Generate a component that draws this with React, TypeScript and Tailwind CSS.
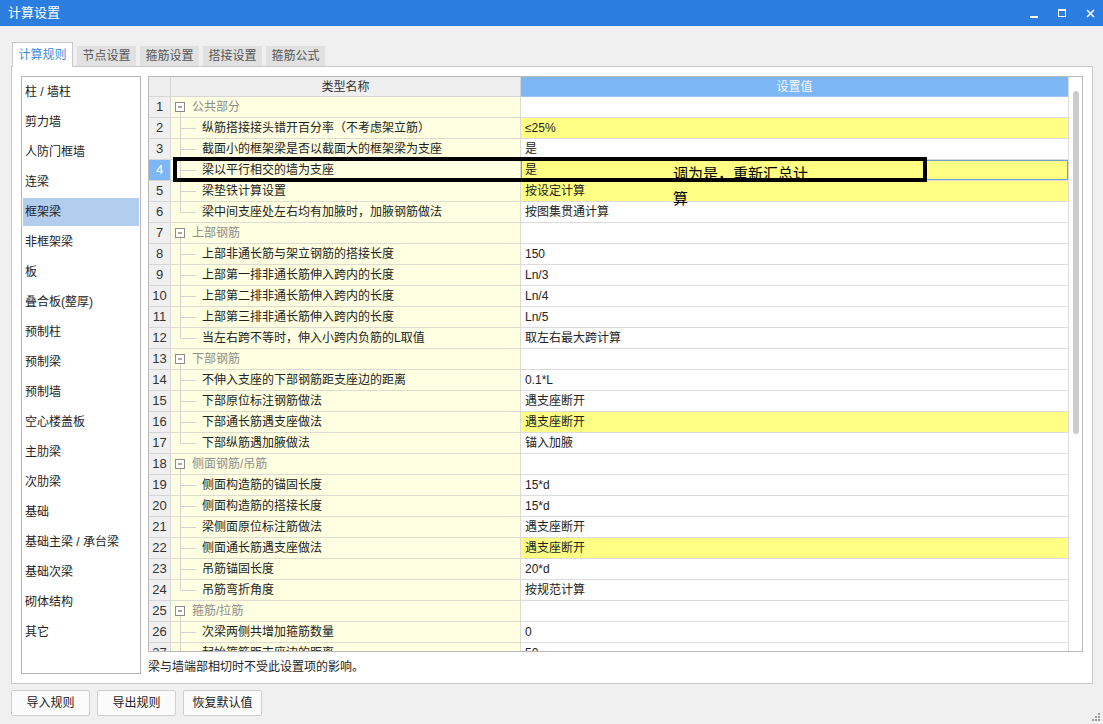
import React from 'react'

type Row = { n: number; name: string; value?: string; group?: boolean; hl?: boolean; last?: boolean }

const rows: Row[] = [
  { n: 1, name: '公共部分', group: true },
  { n: 2, name: '纵筋搭接接头错开百分率（不考虑架立筋）', value: '≤25%', hl: true },
  { n: 3, name: '截面小的框架梁是否以截面大的框架梁为支座', value: '是' },
  { n: 4, name: '梁以平行相交的墙为支座', value: '是', hl: true },
  { n: 5, name: '梁垫铁计算设置', value: '按设定计算', hl: true },
  { n: 6, name: '梁中间支座处左右均有加腋时，加腋钢筋做法', value: '按图集贯通计算', last: true },
  { n: 7, name: '上部钢筋', group: true },
  { n: 8, name: '上部非通长筋与架立钢筋的搭接长度', value: '150' },
  { n: 9, name: '上部第一排非通长筋伸入跨内的长度', value: 'Ln/3' },
  { n: 10, name: '上部第二排非通长筋伸入跨内的长度', value: 'Ln/4' },
  { n: 11, name: '上部第三排非通长筋伸入跨内的长度', value: 'Ln/5' },
  { n: 12, name: '当左右跨不等时，伸入小跨内负筋的L取值', value: '取左右最大跨计算', last: true },
  { n: 13, name: '下部钢筋', group: true },
  { n: 14, name: '不伸入支座的下部钢筋距支座边的距离', value: '0.1*L' },
  { n: 15, name: '下部原位标注钢筋做法', value: '遇支座断开' },
  { n: 16, name: '下部通长筋遇支座做法', value: '遇支座断开', hl: true },
  { n: 17, name: '下部纵筋遇加腋做法', value: '锚入加腋', last: true },
  { n: 18, name: '侧面钢筋/吊筋', group: true },
  { n: 19, name: '侧面构造筋的锚固长度', value: '15*d' },
  { n: 20, name: '侧面构造筋的搭接长度', value: '15*d' },
  { n: 21, name: '梁侧面原位标注筋做法', value: '遇支座断开' },
  { n: 22, name: '侧面通长筋遇支座做法', value: '遇支座断开', hl: true },
  { n: 23, name: '吊筋锚固长度', value: '20*d' },
  { n: 24, name: '吊筋弯折角度', value: '按规范计算', last: true },
  { n: 25, name: '箍筋/拉筋', group: true },
  { n: 26, name: '次梁两侧共增加箍筋数量', value: '0' },
  { n: 27, name: '起始箍筋距支座边的距离', value: '50' },
]

const sideItems = [
  '柱 / 墙柱', '剪力墙', '人防门框墙', '连梁', '框架梁', '非框架梁', '板', '叠合板(整厚)',
  '预制柱', '预制梁', '预制墙', '空心楼盖板', '主肋梁', '次肋梁', '基础', '基础主梁 / 承台梁',
  '基础次梁', '砌体结构', '其它',
]

const tabs = ['计算规则', '节点设置', '箍筋设置', '搭接设置', '箍筋公式']

function Tree({ group, last }: { group?: boolean; last?: boolean }) {
  return (
    <svg width="31" height="20" className="shrink-0">
      {group ? (
        <>
          <rect x="4.5" y="5.5" width="9" height="9" fill="#fff" stroke="#8c8c8c" />
          <line x1="7" y1="10" x2="11" y2="10" stroke="#555" />
          <line x1="9.5" y1="15" x2="9.5" y2="20" stroke="#d2d2d2" />
        </>
      ) : (
        <>
          <line x1="9.5" y1="0" x2="9.5" y2={last ? 10.5 : 20} stroke="#d2d2d2" />
          <line x1="10" y1="10.5" x2="25" y2="10.5" stroke="#d2d2d2" />
        </>
      )}
    </svg>
  )
}

export default function App() {
  return (
    <div className="relative w-[1103px] h-[724px] bg-[#f0f0f0] flex flex-col overflow-hidden text-[12px] text-[#222] font-['Liberation_Sans','Noto_Sans_CJK_SC',sans-serif]">
      {/* title bar */}
      <div className="h-[26px] shrink-0 bg-[#2b7de0] flex items-center justify-between pl-[8px] pr-[8px] text-white">
        <span className="text-[13px]">计算设置</span>
        <div className="flex items-center gap-[20px]">
          <svg width="8" height="10"><line x1="0" y1="9" x2="8" y2="9" stroke="#fff" strokeWidth="2" /></svg>
          <svg width="8" height="8"><rect x="0.5" y="0.5" width="7" height="7" fill="none" stroke="#fff" /><line x1="0" y1="1.5" x2="8" y2="1.5" stroke="#fff" /></svg>
          <svg width="9" height="9"><path d="M1 1 L8 8 M8 1 L1 8" stroke="#fff" strokeWidth="1.5" /></svg>
        </div>
      </div>

      {/* tabs */}
      <div className="flex items-end gap-[4px] pl-[12px] pt-[15px] h-[40px] shrink-0">
        {tabs.map((t, i) =>
          i === 0 ? (
            <div key={t} className="relative z-10 h-[25px] w-[61px] -mb-px bg-white border border-b-0 border-[#c9c9c9] flex items-center justify-center text-[12px] text-[#3a8ee6]">
              {t}
            </div>
          ) : (
            <div key={t} className="h-[20px] w-[59px] bg-[#e1e1e1] flex items-center justify-center text-[12px] text-[#555]">
              {t}
            </div>
          ),
        )}
      </div>

      {/* main panel */}
      <div className="ml-[11px] w-[1082px] h-[618px] shrink-0 bg-white border border-[#c9c9c9] pt-[9px] pl-[9px] flex gap-[7px]">
        {/* side list */}
        <div className="w-[120px] h-[598px] border border-[#b5b5b5] shrink-0">
          {sideItems.map((s, i) => (
            <div key={s} className="h-[30px] py-px px-px">
              <div className={`h-[28px] flex items-center pl-[2px] ${i === 4 ? 'bg-[#b3cdef]' : ''}`}>{s}</div>
            </div>
          ))}
        </div>

        <div className="flex flex-col">
          {/* table */}
          <div className="w-[935px] h-[576px] border border-[#b9b9b9] flex">
            <div className="w-[919px] flex flex-col overflow-hidden">
              <div className="flex h-[20px] shrink-0">
                <div className="w-[22px] bg-[#efefef] border-r border-b border-[#d6d6d6]" />
                <div className="w-[350px] bg-[#efefef] border-r border-b border-[#d6d6d6] flex items-center justify-center text-[#333]">类型名称</div>
                <div className="w-[547px] bg-[#7db7f5] border-b border-[#9cc4ef] flex items-center justify-center text-[#f4f8ff]">设置值</div>
              </div>
              {rows.map((r) => {
                const sel = r.n === 4
                return (
                  <div key={r.n} className="flex h-[21px] shrink-0">
                    <div className={`w-[22px] shrink-0 border-r border-b border-[#d6d6d6] flex items-center justify-center text-[13px] ${sel ? 'bg-[#7db7f5] text-white' : 'bg-[#f0f0f0] text-[#333]'}`}>
                      {r.n}
                    </div>
                    <div className="w-[350px] shrink-0 border-r border-b border-[#dcdcd0] bg-[#ffffe1] flex items-center overflow-hidden whitespace-nowrap">
                      <Tree group={r.group} last={r.last} />
                      <span className={r.group ? 'text-[#8d8d8d] -ml-[10px]' : 'text-[#222]'}>{r.name}</span>
                    </div>
                    <div
                      className={`w-[547px] shrink-0 border-b border-[#dcdcdc] flex items-center pl-[4px] ${r.hl ? 'bg-[#ffff84]' : 'bg-white'} ${sel ? 'shadow-[inset_0_0_0_1px_#6f9fd0]' : ''}`}
                    >
                      {r.value}
                    </div>
                  </div>
                )
              })}
            </div>
            <div className="w-[14px] border-l border-[#dcdcdc] pt-[14px] flex justify-center">
              <div className="w-[6px] h-[343px] rounded-full bg-[#cbcbcb]" />
            </div>
          </div>
          <div className="mt-[6px] text-[12px] text-[#222]">梁与墙端部相切时不受此设置项的影响。</div>
        </div>
      </div>

      {/* buttons */}
      <div className="flex gap-[7px] pl-[11px] pt-[6px]">
        {['导入规则', '导出规则', '恢复默认值'].map((b) => (
          <div key={b} className="w-[79px] h-[26px] bg-[#fbfbfb] border border-[#cfcfcf] rounded-[2px] flex items-center justify-center text-[#222]">
            {b}
          </div>
        ))}
      </div>

      {/* resize grip */}
      <svg width="9" height="9" className="absolute right-[3px] bottom-[3px]">
        {[[7, 1], [7, 4], [4, 4], [7, 7], [4, 7], [1, 7]].map(([x, y], i) => (
          <rect key={i} x={x} y={y} width="2" height="2" fill="#9a9a9a" />
        ))}
      </svg>

      {/* annotation overlay */}
      <div className="absolute left-[173px] top-[157px] w-[754px] h-[25px] border-4 border-black" />
      <div className="absolute left-[673px] top-[160px] w-[138px] text-[15px] leading-[25px] text-black font-['Noto_Sans_CJK_SC',sans-serif]">
        调为是，重新汇总计算
      </div>
    </div>
  )
}
